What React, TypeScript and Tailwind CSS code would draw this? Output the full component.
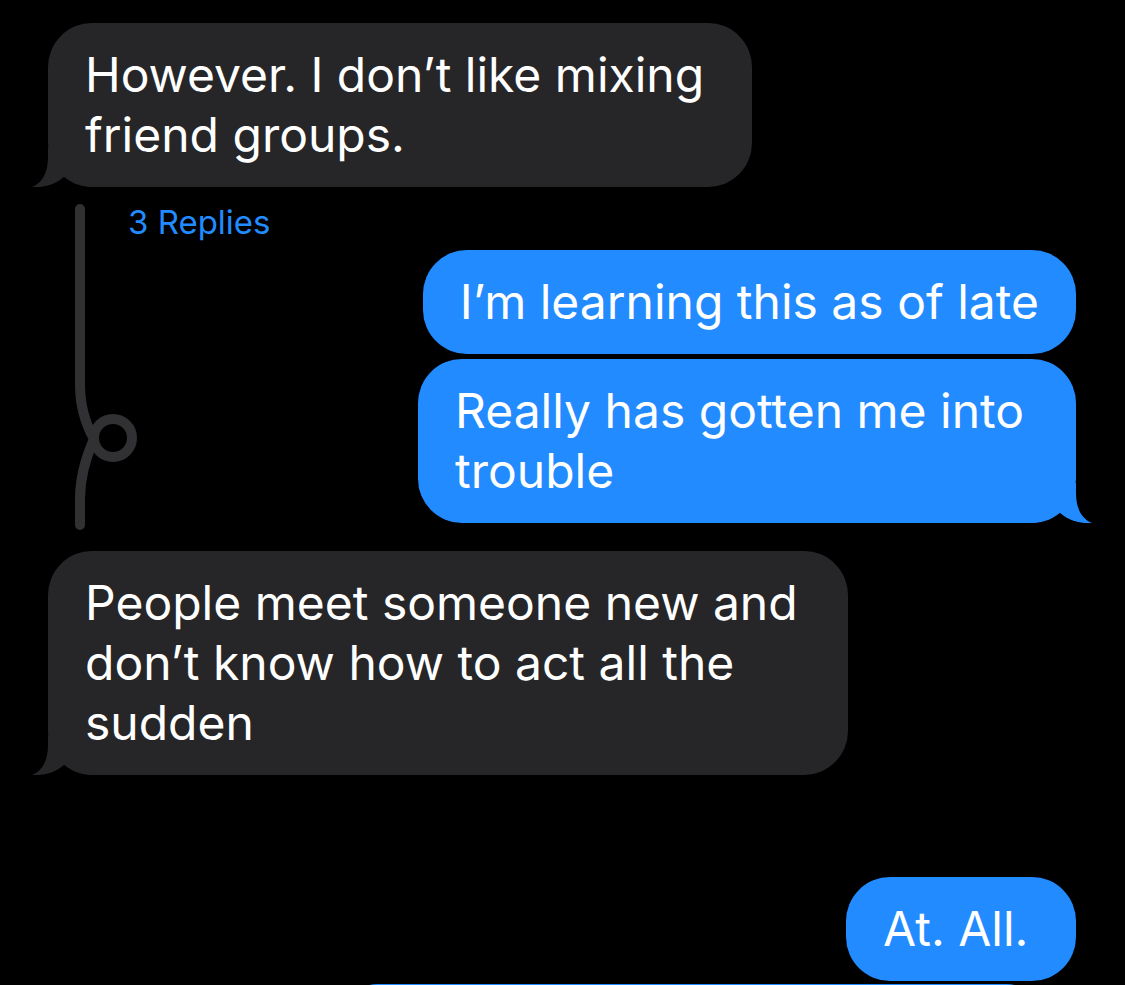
import React from "react";

const GRAY = "#262629";
const BLUE = "#218bff";

function Tail({ side, color }: { side: "left" | "right"; color: string }) {
  return (
    <svg
      width="60"
      height="40"
      viewBox="0 0 60 40"
      className={side === "left" ? "absolute bottom-0 -left-4" : "absolute bottom-0 -right-4"}
    >
      <g transform={side === "left" ? undefined : "translate(60,0) scale(-1,1)"}>
        <path
          d="M16 0 L16 10 C16 26 10 36 0 40 C12 41 26 37 35 27 C44 36 52 40 60 40 L60 0 Z"
          fill={color}
        />
      </g>
    </svg>
  );
}

function Bubble({
  lines,
  color,
  tail,
  className = "",
}: {
  lines: string[];
  color: "gray" | "blue";
  tail?: "left" | "right";
  className?: string;
}) {
  const bg = color === "gray" ? "bg-[#262629]" : "bg-[#218bff]";
  return (
    <div className={`relative rounded-[44px] px-[37px] py-[22px] ${bg} ${className}`}>
      {tail && <Tail side={tail} color={color === "gray" ? GRAY : BLUE} />}
      <div className="relative text-[48px] leading-[60px] text-white whitespace-nowrap">
        {lines.map((l, i) => (
          <div key={i}>{l}</div>
        ))}
      </div>
    </div>
  );
}

export default function App() {
  return (
    <div className="w-[1125px] h-[985px] bg-black overflow-hidden flex flex-col font-['Inter',sans-serif]">
      <Bubble
        className="mt-[23px] ml-[48px] self-start w-[704px]"
        color="gray"
        tail="left"
        lines={["However. I don\u2019t like mixing", "friend groups."]}
      />

      {/* thread */}
      <div className="relative flex flex-col">
        <svg className="absolute left-0 top-0" width="160" height="360" viewBox="0 0 160 360">
          <g fill="none" stroke="#313134" strokeWidth="10" strokeLinecap="round" transform="translate(0,-188)">
            <path d="M80 210 V385 C80 410 86 426 94 440" />
            <circle cx="113" cy="439" r="19" />
            <path d="M94 440 C86 458 80 478 80 500 V526" />
          </g>
        </svg>
        <div className="ml-[128px] mt-[15px] text-[33px] leading-[40px] text-[#218bff]">3 Replies</div>
        <Bubble
          className="mt-[8px] mr-[49px] self-end w-fit"
          color="blue"
          lines={["I\u2019m learning this as of late"]}
        />
        <Bubble
          className="mt-[5px] mr-[49px] self-end w-[658px]"
          color="blue"
          tail="right"
          lines={["Really has gotten me into", "trouble"]}
        />
      </div>

      <Bubble
        className="mt-[28px] ml-[48px] self-start w-[800px]"
        color="gray"
        tail="left"
        lines={["People meet someone new and", "don\u2019t know how to act all the", "sudden"]}
      />

      <Bubble className="mt-[102px] mr-[49px] self-end w-[230px]" color="blue" lines={["At. All."]} />

      <div className="mt-[3px] mr-[88px] self-end w-[690px] h-[104px] rounded-[30px] bg-[#218bff] shrink-0" />
    </div>
  );
}
